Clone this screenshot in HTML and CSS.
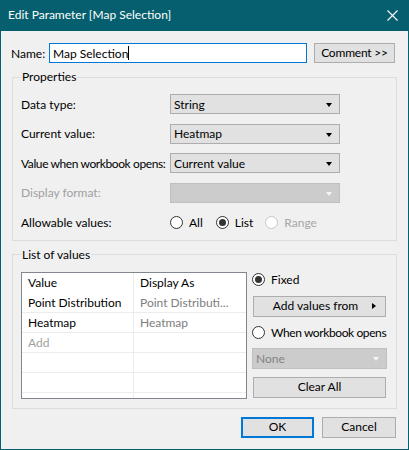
FILE: index.html
```html
<!DOCTYPE html>
<html>
<head>
<meta charset="utf-8">
<title>Edit Parameter</title>
<link rel="stylesheet" href="styles.css">
</head>
<body>
<div class="window">
  <div class="titlebar">
    <span class="title">Edit Parameter [Map Selection]</span>
    <svg class="close" width="11" height="11" viewBox="0 0 11 11"><path d="M0.5 0.5 L10.5 10.5 M10.5 0.5 L0.5 10.5" stroke="#fff" stroke-width="1.1" fill="none"/></svg>
  </div>
  <div class="content">
    <div class="name-row">
      <span class="name-label">Name:</span>
      <div class="textbox"><span class="typed">Map Selection</span><span class="caret"></span></div>
      <div class="btn comment">Comment &gt;&gt;</div>
    </div>

    <fieldset class="group props">
      <legend>Properties</legend>
      <div class="prop-grid">
        <span class="lbl">Data type:</span>
        <div class="combo"><span>String</span><i class="arrow"></i></div>
        <span class="lbl">Current value:</span>
        <div class="combo"><span>Heatmap</span><i class="arrow"></i></div>
        <span class="lbl tight">Value when workbook opens:</span>
        <div class="combo"><span>Current value</span><i class="arrow"></i></div>
        <span class="lbl disabled">Display format:</span>
        <div class="combo off"><span></span><i class="arrow"></i></div>
        <span class="lbl">Allowable values:</span>
        <div class="radios">
          <span class="radio"><i class="dot"></i>All</span>
          <span class="radio on"><i class="dot"></i>List</span>
          <span class="radio off"><i class="dot"></i>Range</span>
        </div>
      </div>
    </fieldset>

    <fieldset class="group list">
      <legend>List of values</legend>
      <div class="list-body">
        <div class="table">
          <div class="row head"><span class="cell">Value</span><span class="cell">Display As</span></div>
          <div class="row"><span class="cell">Point Distribution</span><span class="cell muted">Point Distributi...</span></div>
          <div class="row"><span class="cell">Heatmap</span><span class="cell muted">Heatmap</span></div>
          <div class="row"><span class="cell faint">Add</span><span class="cell"></span></div>
          <div class="row"><span class="cell"></span><span class="cell"></span></div>
          <div class="row"><span class="cell"></span><span class="cell"></span></div>
          <div class="row"><span class="cell"></span><span class="cell"></span></div>
        </div>
        <div class="side">
          <span class="radio on"><i class="dot"></i>Fixed</span>
          <div class="btn wide addfrom"><span>Add values from</span><i class="rarrow"></i></div>
          <span class="radio when tight"><i class="dot"></i>When workbook opens</span>
          <div class="combo off none"><span>None</span><i class="arrow"></i></div>
          <div class="btn wide clear">Clear All</div>
        </div>
      </div>
    </fieldset>

    <div class="footer">
      <div class="btn ok">OK</div>
      <div class="btn cancel">Cancel</div>
    </div>
  </div>
</div>
</body>
</html>
```
FILE: styles.css
```css
html, body {
  margin: 0;
  padding: 0;
}
body {
  font-family: Lato, "Liberation Sans", sans-serif;
  font-size: 12px;
  color: #000;
  background: #f0f0f0;
  white-space: nowrap;
}
.tight {
  letter-spacing: -0.4px;
}
.window {
  width: 409px;
  height: 450px;
  box-sizing: border-box;
  border: 1px solid #065f6e;
  border-top: none;
  background: #f0f0f0;
  overflow: hidden;
}
.titlebar {
  height: 31px;
  background: #065f6e;
  color: #fff;
  display: flex;
  align-items: center;
  justify-content: space-between;
  padding: 0 10px 0 7px;
}
.title {
  font-size: 12px;
  line-height: 16px;
  padding-bottom: 1px;
}
.close {
  display: block;
  margin-top: -1px;
}
.content {
  display: flex;
  flex-direction: column;
}
.name-row {
  display: flex;
  align-items: center;
  margin: 12px 0 0 10px;
  height: 20px;
}
.name-label {
  width: 38px;
  flex: none;
}
.textbox {
  width: 258px;
  height: 20px;
  box-sizing: border-box;
  border: 1px solid #0078d7;
  background: #fff;
  display: flex;
  align-items: center;
  padding-left: 3px;
}
.caret {
  display: inline-block;
  width: 1px;
  height: 14px;
  background: #000;
}
.btn {
  box-sizing: border-box;
  height: 21px;
  background: #e1e1e1;
  border: 1px solid #adadad;
  display: flex;
  align-items: center;
  justify-content: center;
  line-height: 16px;
}
.comment {
  width: 81px;
  height: 20px;
  margin-left: 7px;
  letter-spacing: -0.2px;
}
.group {
  margin: 6px 11px 0 11px;
  border: 1px solid #dcdcdc;
  padding: 9px 8px 7px 8px;
  min-width: 0;
}
.group legend {
  padding: 0 1px;
  line-height: 16px;
}
.prop-grid {
  display: grid;
  grid-template-columns: 149px 170px;
  grid-auto-rows: 20px;
  row-gap: 9.67px;
  align-items: center;
}
.lbl.disabled {
  color: #a0a0a0;
}
.combo {
  position: relative;
  box-sizing: border-box;
  height: 20px;
  background: #e1e1e1;
  border: 1px solid #adadad;
  display: flex;
  align-items: center;
  padding-left: 3px;
}
.combo .arrow {
  position: absolute;
  right: 7px;
  top: 8px;
  width: 0;
  height: 0;
  border-left: 3.5px solid transparent;
  border-right: 3.5px solid transparent;
  border-top: 4px solid #000;
}
.combo.off {
  background: #cccccc;
  border-color: #bfbfbf;
  color: #838383;
}
.combo.off .arrow {
  border-top-color: #f4f4f4;
}
.radios {
  display: flex;
  align-items: center;
}
.radio {
  display: flex;
  align-items: center;
  height: 16px;
  margin-right: 13px;
}
.radio .dot {
  box-sizing: border-box;
  flex: none;
  width: 13px;
  height: 13px;
  border: 1px solid #333;
  border-radius: 50%;
  background: #fff;
  margin-right: 6px;
  display: flex;
  align-items: center;
  justify-content: center;
}
.radio.on .dot::after {
  content: "";
  width: 7px;
  height: 7px;
  border-radius: 50%;
  background: #333;
}
.radio.off {
  color: #a6a6a6;
}
.radio.off .dot {
  border-color: #c6c6c6;
}
.radios .radio:nth-child(2) {
  margin-right: 12px;
}
.list {
  padding-bottom: 9px;
}
.list-body {
  display: flex;
  align-items: flex-start;
}
.table {
  width: 226px;
  height: 127px;
  box-sizing: border-box;
  border: 1px solid #828790;
  background: #fff;
  overflow: hidden;
  flex: none;
}
.row {
  display: flex;
  height: 20px;
  box-sizing: border-box;
  border-bottom: 1px solid #ececec;
}
.row.head {
  border-bottom: none;
}
.cell {
  box-sizing: border-box;
  width: 112px;
  padding-left: 6px;
  line-height: 19px;
  overflow: hidden;
  border-right: 1px solid #ececec;
}
.cell + .cell {
  border-right: none;
}
.row.head .cell {
  line-height: 20px;
}
.muted {
  color: #7d7d7d;
}
.faint {
  color: #a0a0a0;
}
.side {
  margin-left: 5px;
  width: 135px;
  display: flex;
  flex-direction: column;
  align-items: flex-start;
}
.side .radio {
  margin-right: 0;
}
.btn.wide {
  width: 133px;
  margin-left: 1px;
}
.addfrom {
  margin-top: 8px;
  position: relative;
}
.addfrom span {
  margin-left: -8px;
}
.rarrow {
  position: absolute;
  right: 9px;
  top: 6px;
  width: 0;
  height: 0;
  border-top: 3.5px solid transparent;
  border-bottom: 3.5px solid transparent;
  border-left: 4px solid #000;
}
.when {
  margin-top: 8px;
}
.none {
  width: 135px;
  height: 21px;
  margin-top: 7px;
}
.clear {
  margin-top: 8px;
}
.footer {
  display: flex;
  justify-content: flex-end;
  gap: 8px;
  margin: 8px 12px 0 0;
}
.ok {
  width: 73px;
  border: 2px solid #0078d7;
}
.cancel {
  width: 74px;
}
```
